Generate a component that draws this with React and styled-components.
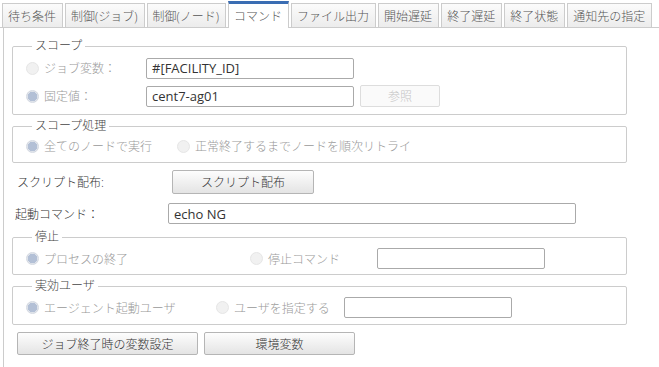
import styled, { createGlobalStyle } from "styled-components";

const Global = createGlobalStyle`
  body {
    margin: 0;
    background: #fff;
    font-family: "Open Sans", "Noto Sans CJK JP", sans-serif;
    font-size: 12px;
    font-weight: 300;
    color: #333;
  }
`;

const TabBar = styled.div`
  display: flex;
  align-items: flex-end;
  gap: 2px;
  height: 27px;
  padding-left: 2px;
  border-bottom: 1px solid #ccc;
`;

const Tab = styled.div`
  height: ${({ $active }) => ($active ? "24px" : "23px")};
  padding: 0 6px 0 5px;
  display: flex;
  align-items: center;
  border: 1px solid #ccc;
  border-bottom: none;
  border-top: ${({ $active }) => ($active ? "3px solid #3a6db3" : "1px solid #ccc")};
  background: ${({ $active }) =>
    $active ? "#fff" : "linear-gradient(#fbfbfb, #ececec)"};
  margin-bottom: ${({ $active }) => ($active ? "-1px" : "0")};
  color: #555;
  font-size: 12px;
  white-space: nowrap;
`;

const Panel = styled.div`
  margin-left: 3px;
  border-left: 1px solid #ccc;
  padding: 10px 0 12px 8px;
  width: 615px;
`;

const Group = styled.fieldset`
  margin: ${({ $top }) => $top || 0}px 0 0 0;
  padding: ${({ $pad }) => $pad || "3px 0 7px 13px"};
  border: 1px solid #ccc;
  border-radius: 2px;
  display: flex;
  flex-direction: column;
  gap: 6px;
`;

const Legend = styled.legend`
  margin-left: 6px;
  padding: 0 3px;
  font-size: 12px;
  line-height: 16px;
  color: #444;
`;

const Row = styled.div`
  display: flex;
  align-items: center;
  height: ${({ $h }) => $h || 22}px;
  margin-top: ${({ $top }) => $top || 0}px;
  margin-left: ${({ $left }) => $left || 0}px;
  gap: ${({ $gap }) => $gap || 0}px;
`;

const Option = styled.label`
  display: flex;
  align-items: center;
  gap: 5px;
  width: ${({ $w }) => ($w ? `${$w}px` : "auto")};
  flex-shrink: 0;
  color: #999;
  white-space: nowrap;
`;

const Radio = styled.span`
  width: 13px;
  height: 13px;
  border-radius: 50%;
  box-sizing: border-box;
  background: ${({ $on }) =>
    $on ? "radial-gradient(circle, #b3c0d6 0 4.5px, #dfe3ea 5px)" : "#f1f1f1"};
  border: 1px solid ${({ $on }) => ($on ? "#d4d9e2" : "#e6e6e6")};
  flex-shrink: 0;
`;

const Label = styled.span`
  width: ${({ $w }) => $w}px;
  flex-shrink: 0;
  color: #333;
  white-space: nowrap;
`;

const Input = styled.div`
  width: ${({ $w }) => $w}px;
  height: 21px;
  box-sizing: border-box;
  border: 1px solid #aaa;
  border-radius: 2px;
  padding: 0 5px;
  display: flex;
  align-items: center;
  font-size: 13px;
  font-weight: 400;
  color: #333;
  background: #fff;
`;

const Button = styled.button`
  width: ${({ $w }) => $w}px;
  height: ${({ $h }) => $h || 23}px;
  margin-left: ${({ $left }) => $left || 0}px;
  box-sizing: border-box;
  border: 1px solid ${({ disabled }) => (disabled ? "#ddd" : "#b5b5b5")};
  border-radius: 2px;
  background: ${({ disabled }) =>
    disabled ? "#fafafa" : "linear-gradient(#fdfdfd, #e4e4e4)"};
  color: ${({ disabled }) => (disabled ? "#c4c4c4" : "#333")};
  font-family: inherit;
  font-weight: inherit;
  font-size: 12px;
  padding: 0;
  flex-shrink: 0;
`;

const tabs = [
  "待ち条件",
  "制御(ジョブ)",
  "制御(ノード)",
  "コマンド",
  "ファイル出力",
  "開始遅延",
  "終了遅延",
  "終了状態",
  "通知先の指定",
];

export default function App() {
  return (
    <>
      <Global />
      <TabBar>
        {tabs.map((t) => (
          <Tab key={t} $active={t === "コマンド"}>
            {t}
          </Tab>
        ))}
      </TabBar>
      <Panel>
        <Group>
          <Legend>スコープ</Legend>
          <Row>
            <Option $w={120}>
              <Radio />
              ジョブ変数：
            </Option>
            <Input $w={208}>#[FACILITY_ID]</Input>
          </Row>
          <Row>
            <Option $w={120}>
              <Radio $on />
              固定値：
            </Option>
            <Input $w={208}>cent7-ag01</Input>
            <Button $w={80} $h={22} $left={6} disabled>
              参照
            </Button>
          </Row>
        </Group>

        <Group $top={3} $pad="2px 0 6px 13px">
          <Legend>スコープ処理</Legend>
          <Row $h={20}>
            <Option $w={151}>
              <Radio $on />
              全てのノードで実行
            </Option>
            <Option>
              <Radio />
              正常終了するまでノードを順次リトライ
            </Option>
          </Row>
        </Group>

        <Row $h={24} $top={7} $left={5}>
          <Label $w={155}>スクリプト配布:</Label>
          <Button $w={142} $h={24}>
            スクリプト配布
          </Button>
        </Row>

        <Row $h={21} $top={9} $left={3}>
          <Label $w={153}>起動コマンド：</Label>
          <Input $w={408}>echo NG</Input>
        </Row>

        <Group $top={5} $pad="3px 0 5px 13px">
          <Legend>停止</Legend>
          <Row $h={21}>
            <Option $w={224}>
              <Radio $on />
              プロセスの終了
            </Option>
            <Option $w={127}>
              <Radio />
              停止コマンド
            </Option>
            <Input $w={168} />
          </Row>
        </Group>

        <Group $top={3} $pad="3px 0 6px 13px">
          <Legend>実効ユーザ</Legend>
          <Row $h={21}>
            <Option $w={190}>
              <Radio $on />
              エージェント起動ユーザ
            </Option>
            <Option $w={128}>
              <Radio />
              ユーザを指定する
            </Option>
            <Input $w={168} />
          </Row>
        </Group>

        <Row $h={23} $top={7} $left={5} $gap={6}>
          <Button $w={181}>ジョブ終了時の変数設定</Button>
          <Button $w={151}>環境変数</Button>
        </Row>
      </Panel>
    </>
  );
}
